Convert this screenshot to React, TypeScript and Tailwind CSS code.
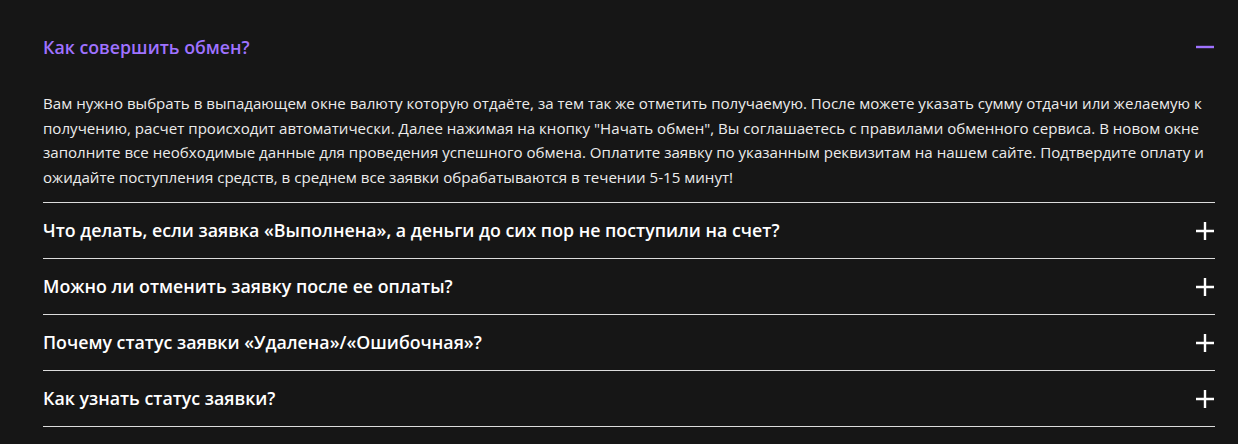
const items = [
  'Что делать, если заявка «Выполнена», а деньги до сих пор не поступили на счет?',
  'Можно ли отменить заявку после ее оплаты?',
  'Почему статус заявки «Удалена»/«Ошибочная»?',
  'Как узнать статус заявки?',
];

function PlusIcon() {
  return (
    <svg width="20" height="20" viewBox="0 0 20 20" className="shrink-0">
      <path d="M10 1v18M1 10h18" stroke="#ffffff" strokeWidth="2.4" />
    </svg>
  );
}

function MinusIcon() {
  return (
    <svg width="20" height="20" viewBox="0 0 20 20" className="shrink-0">
      <path d="M1 10h18" stroke="#9f72ff" strokeWidth="2.4" />
    </svg>
  );
}

export default function App() {
  return (
    <div className="min-h-[444px] bg-[#161616] pl-[43px] pr-[23px] font-['Open_Sans',sans-serif]">
      <div className="pt-[19px] pb-[13px] border-b border-[#dcdcdc]">
        <div className="flex h-[56px] items-center justify-between">
          <span className="text-[17.8px] font-semibold text-[#9f72ff]">Как совершить обмен?</span>
          <MinusIcon />
        </div>
        <p className="pt-4 text-[15.1px] leading-[24.5px] text-[#ececec]">
          Вам нужно выбрать в выпадающем окне валюту которую отдаёте, за тем так же отметить получаемую. После можете указать сумму отдачи или желаемую к получению, расчет происходит автоматически. Далее нажимая на кнопку "Начать обмен", Вы соглашаетесь с правилами обменного сервиса. В новом окне заполните все необходимые данные для проведения успешного обмена. Оплатите заявку по указанным реквизитам на нашем сайте. Подтвердите оплату и ожидайте поступления средств, в среднем все заявки обрабатываются в течении 5-15 минут!
        </p>
      </div>
      {items.map((q) => (
        <div key={q} className="flex h-[56px] items-center justify-between border-b border-[#dcdcdc]">
          <span className="text-[17.8px] font-semibold text-white">{q}</span>
          <PlusIcon />
        </div>
      ))}
    </div>
  );
}
